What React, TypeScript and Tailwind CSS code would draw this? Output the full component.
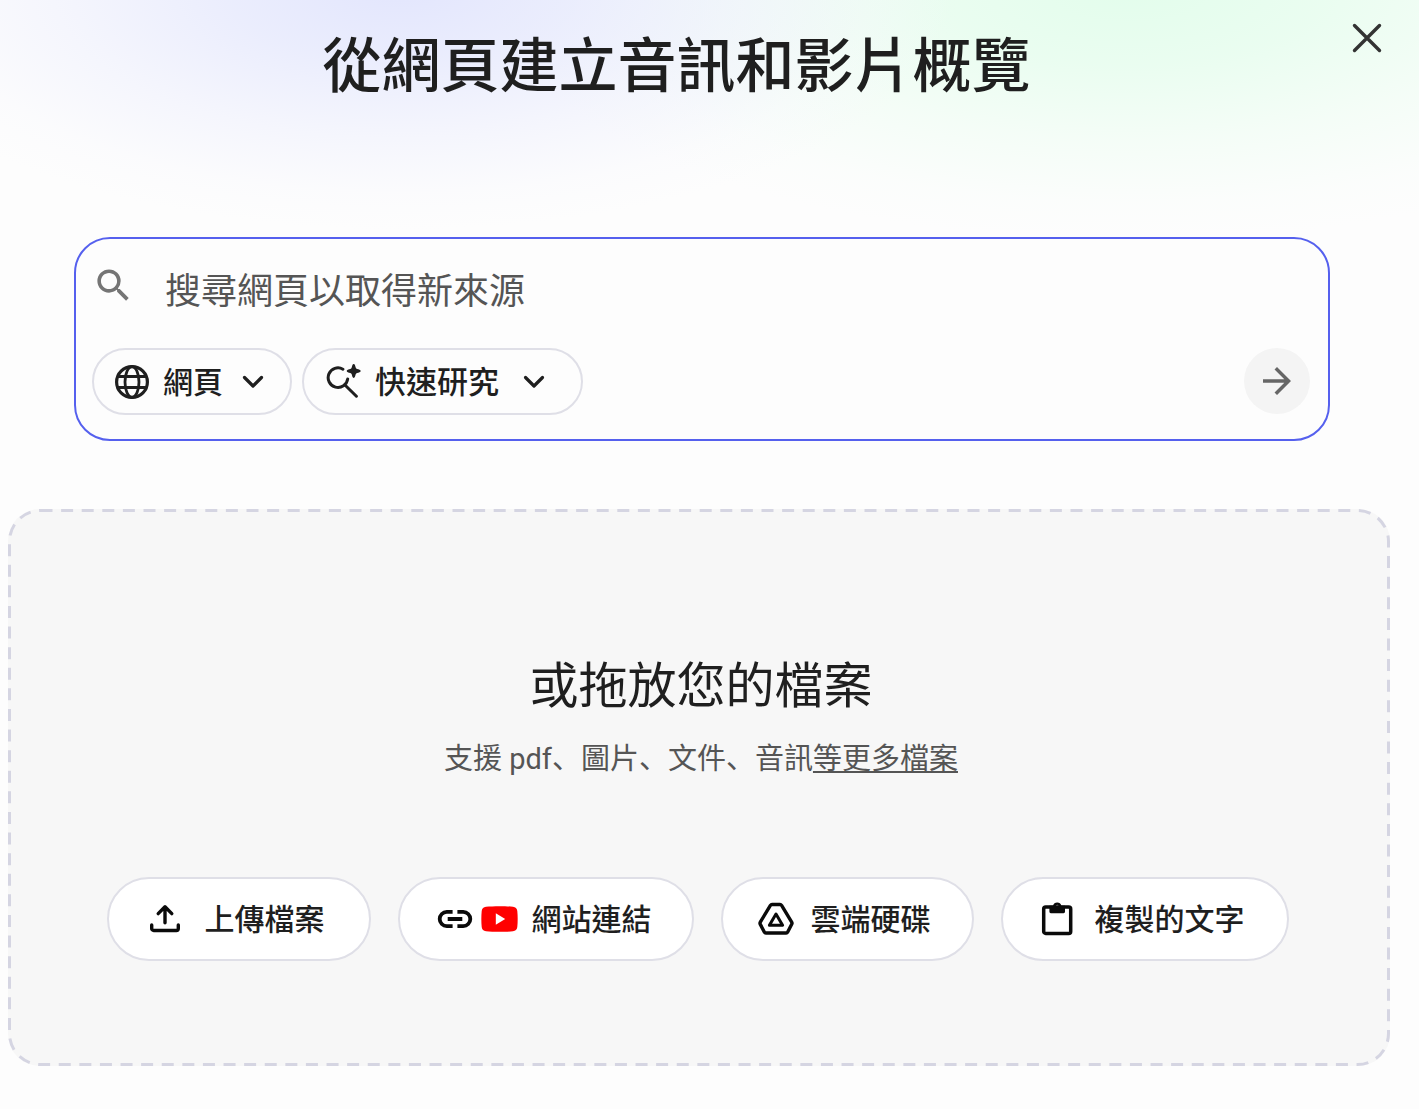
import type { ReactNode } from "react";
import { MdArrowForward, MdSearch } from "react-icons/md";

function GlobeIcon() {
  return (
    <svg width="34" height="34" viewBox="0 0 34 34" fill="none" stroke="currentColor" strokeWidth="2.8" aria-hidden="true">
      <circle cx="17" cy="17" r="15.4" strokeWidth="3.2" />
      <ellipse cx="17" cy="17" rx="7" ry="15.4" />
      <path d="M2.5 11.5h29M2.5 22.5h29" />
    </svg>
  );
}

function QuickSearchIcon() {
  return (
    <svg width="36" height="36" viewBox="0 0 36 36" fill="none" aria-hidden="true">
      <path
        d="M16.9 5.2A9.8 9.8 0 1 0 21.7 14.9M19.2 21.2 30.4 32.2"
        stroke="currentColor"
        strokeWidth="3"
        strokeLinecap="round"
      />
      <path
        d="M27.7 0c1.200 0 1.500 1.800 2 3.500.2.700.7 1.200 1.400 1.400 1.700.5 3.600.8 3.600 2s-1.900 1.500-3.600 2c-.7.200-1.200.7-1.400 1.400-.5 1.700-.8 3.700-2 3.700s-1.500-2-2-3.700c-.2-.7-.7-1.200-1.400-1.400-1.700-.5-3.600-.8-3.600-2s1.900-1.500 3.600-2c.7-.2 1.200-.7 1.400-1.400.5-1.700.8-3.500 2-3.500z"
        fill="currentColor"
      />
    </svg>
  );
}

function ChevronIcon() {
  return (
    <svg width="22" height="14" viewBox="0 0 22 14" fill="none" aria-hidden="true">
      <path d="M2.5 2.5 11 11l8.500-8.500" stroke="currentColor" strokeWidth="3.2" strokeLinecap="round" strokeLinejoin="round" />
    </svg>
  );
}

function CloseIcon() {
  return (
    <svg width="32" height="32" viewBox="0 0 32 32" fill="none" aria-hidden="true">
      <path d="M3.5 3.5l25 25M28.5 3.5l-25 25" stroke="currentColor" strokeWidth="3.4" strokeLinecap="round" />
    </svg>
  );
}

function UploadIcon() {
  return (
    <svg
      width="32"
      height="32"
      viewBox="0 0 32 32"
      fill="none"
      stroke="currentColor"
      strokeWidth="3.4"
      strokeLinecap="round"
      strokeLinejoin="round"
      aria-hidden="true"
    >
      <path d="M2.7 22v3.500a2 2 0 0 0 2 2h22.600a2 2 0 0 0 2-2V22" />
      <path d="M16 19.800V4.200M9.200 10.600 16 3.800l6.800 6.800" />
    </svg>
  );
}

function LinkIcon() {
  return (
    <svg width="36" height="20" viewBox="0 0 36 20" fill="none" stroke="currentColor" strokeWidth="3.8" aria-hidden="true">
      <path d="M15.600 2.900H9.800a7.100 7.100 0 0 0 0 14.200h5.800M20.400 2.900h5.800a7.100 7.100 0 0 1 0 14.200h-5.800M10.700 10h14.600" />
    </svg>
  );
}

function YouTubeIcon() {
  return (
    <svg width="37" height="26" viewBox="0 0 37 26" aria-hidden="true">
      <path
        d="M5 .7C12 0 25 0 32 .7c2.500.200 4 1.700 4.300 4.200.5 5 .5 11.200 0 16.200-.3 2.500-1.800 4-4.300 4.200-7 .700-20 .700-27 0-2.500-.2-4-1.700-4.300-4.200-.5-5-.5-11.200 0-16.200C1 2.400 2.500.900 5 .7z"
        fill="#ff0000"
      />
      <path d="M14.800 7.300v11.400L24.200 13z" fill="#ffffff" />
    </svg>
  );
}

function DriveIcon() {
  return (
    <svg
      width="36"
      height="34"
      viewBox="0 0 36 34"
      fill="none"
      stroke="currentColor"
      strokeWidth="3.4"
      strokeLinejoin="round"
      aria-hidden="true"
    >
      <path d="M14 2.500h8q1 0 1.600.9L33.700 20.100q.6 1 .1 2L29.700 30q-.5 1-1.600 1H7.900q-1.100 0-1.600-1L2.200 22.100q-.5-1 .1-2L12.400 3.400q.6-.9 1.600-.9z" />
      <path d="M18 12l6.600 11.300H11.400z" strokeWidth="3" />
    </svg>
  );
}

function ClipboardIcon() {
  return (
    <svg width="32" height="34" viewBox="0 0 32 34" fill="none" aria-hidden="true">
      <rect x="2.7" y="5" width="27" height="26.4" rx="2" stroke="currentColor" strokeWidth="3.5" />
      <path
        fillRule="evenodd"
        d="M8.400 3.700h3.600a4.400 4.400 0 0 1 8.400 0h3.600V9.800q0 1.400-1.400 1.400H9.800q-1.400 0-1.400-1.400zM16.200 2.800a1.500 1.500 0 1 0 0 3 1.500 1.500 0 0 0 0-3z"
        fill="currentColor"
      />
    </svg>
  );
}

function SourceButton({ className, icon, label }: { className: string; icon: ReactNode; label: string }) {
  return (
    <button
      type="button"
      className={`flex h-[84px] items-center rounded-full border-2 border-[#dfdfe7] bg-white text-[30px] leading-[44px] font-medium whitespace-nowrap text-[#1f1f1f] ${className}`}
    >
      <span className="flex items-center gap-2 text-[#0a0a0a]">{icon}</span>
      <span className="pb-1">{label}</span>
    </button>
  );
}

export default function App() {
  return (
    <div className="min-h-screen bg-[#fdfdfd] bg-[radial-gradient(ellipse_560px_240px_at_400px_-10px,#e3e6fdff_0%,#e6e9fdcc_30%,#eceefd80_60%,#f4f5fd33_85%,#fdfdfd00_100%),radial-gradient(ellipse_640px_250px_at_1130px_-10px,#e3fdecff_0%,#e5fdedcc_30%,#ecfdf180_60%,#f4fdf733_85%,#fdfdfd00_100%)] bg-no-repeat font-['Noto_Sans_CJK_TC',sans-serif] text-[#1f1f1f]">
      <header className="flex items-start pt-[22px] pr-9">
        <h1 className="flex-1 pl-[2px] text-center text-[59px] leading-[80px] font-medium">從網頁建立音訊和影片概覽</h1>
        <button type="button" aria-label="關閉" className="text-[#333333]">
          <CloseIcon />
        </button>
      </header>

      <main className="pt-[135px] pr-[29px] pb-10 pl-2">
        <form
          className="mr-[60px] ml-[66px] rounded-[36px] border-2 border-[#5560ee] pt-[25px] pr-[18px] pb-6 pl-4"
          onSubmit={(event) => event.preventDefault()}
        >
          <div className="flex items-start gap-[30px]">
            <MdSearch size={43} className="shrink-0 text-[#757575]" aria-hidden="true" />
            <input
              type="text"
              aria-label="搜尋網頁以取得新來源"
              placeholder="搜尋網頁以取得新來源"
              className="h-12 min-w-0 flex-1 bg-transparent text-[36px] leading-[48px] outline-none placeholder:text-[#555555] placeholder:opacity-100"
            />
          </div>
          <div className="mt-9 flex items-start">
            <label className="relative flex h-[67px] items-center rounded-full border-2 border-[#dfdfe7] pl-[21px]">
              <GlobeIcon />
              <select
                aria-label="來源類型"
                className="h-full appearance-none bg-transparent pr-[67px] pb-[3px] pl-[14px] text-[30px] font-medium outline-none"
              >
                <option>網頁</option>
              </select>
              <span className="pointer-events-none absolute right-[26px]">
                <ChevronIcon />
              </span>
            </label>
            <label className="relative ml-[10px] flex h-[67px] items-center rounded-full border-2 border-[#dfdfe7] pl-[22px]">
              <QuickSearchIcon />
              <select
                aria-label="研究模式"
                className="h-full appearance-none bg-transparent pr-[82px] pb-[3px] pl-[13px] text-[31px] font-medium outline-none"
              >
                <option>快速研究</option>
              </select>
              <span className="pointer-events-none absolute right-9">
                <ChevronIcon />
              </span>
            </label>
            <button
              type="submit"
              aria-label="提交"
              className="ml-auto flex size-[66px] items-center justify-center rounded-full bg-[#f4f4f4] text-[#666666]"
            >
              <MdArrowForward size={42} aria-hidden="true" />
            </button>
          </div>
        </form>

        <section className="relative mt-[68px] rounded-[32px] bg-[#f7f7f7] pt-[138px] pr-4 pb-[105px] pl-5 text-center">
          <svg className="pointer-events-none absolute inset-0 size-full overflow-visible" fill="none" aria-hidden="true">
            <rect
              x="1.5"
              y="1.5"
              rx="31"
              className="h-[calc(100%-3px)] w-[calc(100%-3px)]"
              stroke="#d5d5e2"
              strokeWidth="3"
              strokeDasharray="12 8.6"
            />
          </svg>
          <h2 className="text-[49px] leading-[70px] font-normal">或拖放您的檔案</h2>
          <p className="mt-5 font-[Roboto,'Noto_Sans_CJK_SC',sans-serif] text-[29px] leading-[44px] text-[#555555]">
            支援 pdf、圖片、文件、音訊
            <a href="#formats" className="underline decoration-2 underline-offset-2">
              等更多檔案
            </a>
          </p>
          <div className="mt-24 flex flex-wrap justify-center gap-[27px] pr-[7px]">
            <SourceButton className="gap-6 pr-11 pl-10" icon={<UploadIcon />} label="上傳檔案" />
            <SourceButton
              className="gap-[14px] pr-10 pl-[37px]"
              icon={
                <>
                  <LinkIcon />
                  <YouTubeIcon />
                </>
              }
              label="網站連結"
            />
            <SourceButton className="gap-[17px] pr-[41px] pl-[35px]" icon={<DriveIcon />} label="雲端硬碟" />
            <SourceButton className="gap-[22px] pr-[42px] pl-[38px]" icon={<ClipboardIcon />} label="複製的文字" />
          </div>
        </section>
      </main>
    </div>
  );
}
